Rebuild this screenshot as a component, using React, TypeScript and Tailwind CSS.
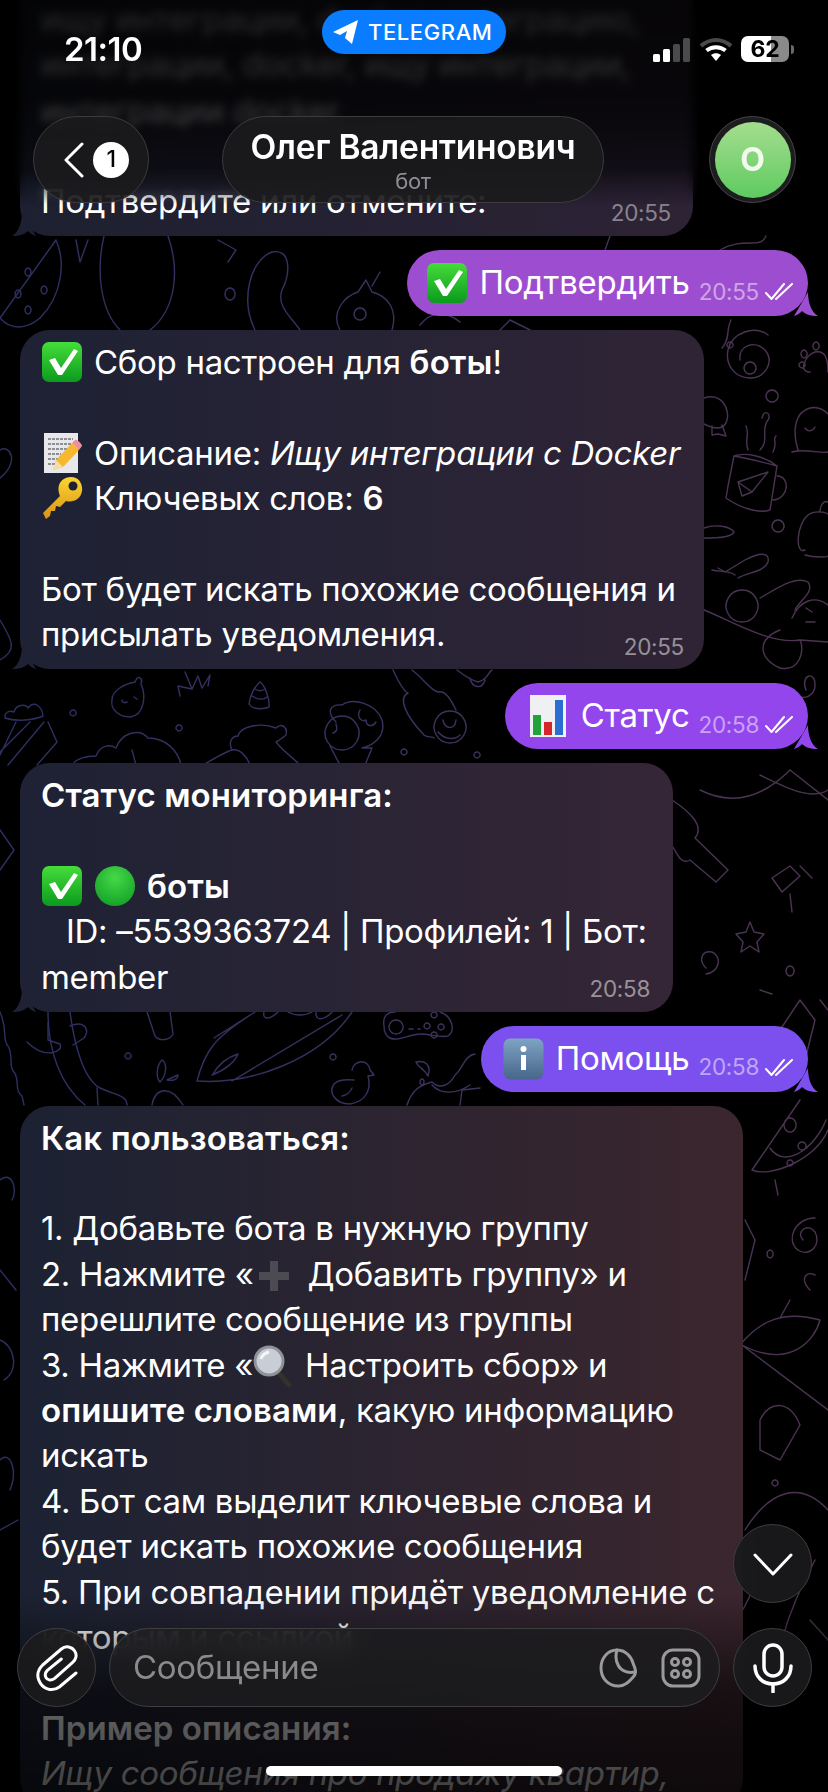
import React from "react";

// doodle wallpaper, coordinates are page pixels
const DOODLES = [
  // top row, left of the first outgoing bubble
  "M0 318 C20 290 40 262 56 240 C66 262 62 296 40 318 C26 330 10 330 0 318 Z",
  "M28 268 a3 4 0 1 0 .1 0 M18 290 a3 4 0 1 0 .1 0 M44 286 a3 4 0 1 0 .1 0 M28 306 a3 4 0 1 0 .1 0",
  "M104 236 C96 270 100 310 120 330 M168 236 C180 270 176 310 150 330 M76 240 L80 262 L88 240",
  "M255 330 C240 300 250 260 272 252 C292 248 290 275 282 290 C276 306 292 318 300 330",
  "M230 288 a5 6 0 1 0 .1 0 M218 240 L236 250 L228 262",
  "M340 330 C330 312 345 296 358 292 L366 280 L372 292 C388 296 398 310 392 330 M360 308 a6 6 0 1 0 .1 0 M372 286 L380 272",
  "M420 325 C430 312 445 310 460 322 M500 330 L510 320 L530 330 M610 236 L605 250 L625 262 M720 250 C745 236 760 250 766 236",
  // right column
  "M740 360 C738 345 755 340 765 350 C775 362 765 378 750 378 C735 378 725 365 728 350 C732 332 755 325 768 335",
  "M750 362 a6 6 0 1 0 .1 0",
  "M810 372 C798 372 805 355 815 352 C825 350 828 358 828 372 M804 350 a3 4 0 1 0 .1 0 M802 362 a3 3 0 1 0 .1 0 M816 342 a3 4 0 1 0 .1 0",
  "M772 390 a6 6 0 1 0 .1 0 M731 320 C726 330 730 340 722 348 M730 342 a3 3 0 1 0 .1 0",
  "M704 398 C722 392 730 410 727 420 C724 432 712 428 704 424 M722 425 L726 436 L718 434 L712 435 L712 426",
  "M798 450 C792 430 795 412 810 408 C818 406 824 410 828 414 M792 452 C805 448 820 454 828 452 M805 428 C808 432 812 432 815 427",
  "M734 456 L728 486 L726 498 C740 508 760 514 770 510 L777 466 C762 462 745 458 734 456 Z M734 456 C745 452 765 456 777 466 M777 476 C790 476 790 498 773 500",
  "M738 482 L768 472 L752 492 L742 496 Z M738 482 L752 492",
  "M748 450 C744 440 750 436 746 426 M760 450 C770 440 760 430 768 420 C772 414 764 408 762 418 M773 452 C778 442 772 440 776 436",
  "M805 550 C795 555 796 525 808 515 C815 510 825 512 828 514 M805 555 C815 558 828 557 828 556 M820 512 C820 505 824 500 828 502",
  "M778 520 a6 6 0 1 0 .1 0",
  "M704 528 C715 524 730 526 734 532 C732 538 715 538 704 538",
  "M704 610 C730 620 770 645 800 640 L828 642 M718 568 L725 572 L745 560 C760 552 770 552 768 562 C764 572 748 572 738 578",
  "M742 590 a16 16 0 1 0 .1 0 M735 575 C728 570 720 572 712 570 M760 598 C775 590 795 575 808 582 C815 592 800 600 795 610",
  "M792 618 C800 600 815 595 828 605 M806 608 L812 612 M806 622 L815 622 M780 630 C755 640 760 660 780 668 C800 672 805 650 800 640",
  "M806 690 C800 675 815 670 815 685 C815 700 795 702 790 688",
  // row left of the status button
  "M5 718 C4 712 10 710 14 712 C16 704 26 704 28 708 C34 700 42 706 43 716 C34 720 16 722 5 718 Z",
  "M0 755 L16 722 M48 722 L57 742 L37 765 M44 722 L8 765 M30 722 L0 752",
  "M112 700 C112 690 125 684 135 682 L137 678 C140 676 143 680 141 684 C146 695 145 715 130 717 C120 717 110 710 112 700 Z M122 700 C122 703 125 703 127 702 M134 697 L137 699",
  "M180 696 L178 686 L192 689 L185 672 M192 689 L198 676 L202 688 L210 675 L208 686",
  "M260 682 C265 685 270 700 269 707 C262 710 252 709 249 704 C250 695 255 686 260 682 Z M252 696 C258 700 264 700 267 697 M255 689 C258 691 262 691 265 689",
  "M336 722 C326 712 330 704 342 705 C352 698 375 702 382 720 C386 735 375 745 362 748 L372 748 L365 765 M340 765 L330 746",
  "M342 716 a17 17 0 1 0 .1 0 M360 710 C356 718 362 722 366 720 C366 726 372 728 376 722 M336 724 C338 730 336 732 333 733",
  "M72 765 C78 756 92 756 96 756 C100 745 110 744 116 748 C122 732 140 728 148 738 C165 738 178 750 181 765 M132 750 L136 765",
  "M203 765 C215 758 225 752 232 750 C228 742 232 736 238 736 C240 726 262 722 276 728 C282 722 288 728 286 735 C282 738 280 740 276 742 C284 752 290 755 300 765 M232 750 C240 748 248 758 250 765",
  "M393 670 C400 685 405 692 408 693 C398 698 405 715 424 735 C428 738 432 736 434 738 M412 670 C425 680 430 690 438 692 C445 690 450 698 456 710",
  "M450 711 a16 16 0 1 0 .1 0 M443 720 C445 730 455 730 456 720 M438 732 C445 740 455 740 460 735",
  "M73 710 a3 3 0 1 0 .1 0 M179 725 a3 3 0 1 0 .1 0 M404 749 a3 3 0 1 0 .1 0 M477 752 a3 3 0 1 0 .1 0",
  "M457 670 C465 676 470 680 478 682 C488 680 488 672 492 670 M470 678 C472 688 482 690 485 680",
  // status side right
  "M790 770 C770 790 740 810 700 790 M760 775 C790 790 812 800 828 790 M790 770 L828 800",
  "M672 800 C690 812 705 826 695 838 L728 870 L716 882 L690 860 C680 866 676 850 672 846",
  "M772 878 L790 866 L800 876 L782 892 Z M800 866 L812 878 M792 912 L790 894",
  "M750 922 L754 932 L764 934 L757 942 L759 952 L750 946 L741 952 L743 942 L736 934 L746 932 Z",
  "M706 968 C698 960 702 950 712 952 C722 956 720 972 706 974 M790 966 a4 5 0 1 0 .1 0 M760 990 L772 994",
  "M800 1000 L815 1020 L805 1060 L790 1052 L780 1030 Z M820 1000 L828 1010",
  // gap under the status bubble
  "M0 1012 C8 1030 2 1040 8 1046 C14 1056 8 1066 14 1072 C20 1080 14 1090 22 1096 L24 1105",
  "M70 1012 C75 1050 85 1080 100 1088 C115 1095 127 1095 127 1105 M48 1012 C48 1050 60 1085 85 1105 M97 1088 L98 1105",
  "M48 1023 L48 1040 L60 1044 C64 1052 45 1060 27 1042 M70 1026 C85 1020 90 1030 84 1038 L73 1045",
  "M147 1012 L155 1036 C160 1042 170 1040 173 1034 L170 1012 M128 1053 a3 3 0 1 0 .1 0",
  "M162 1060 C156 1066 156 1078 160 1082 C166 1076 168 1064 162 1060 Z M167 1080 L178 1075 C178 1080 172 1081 167 1080 M152 1105 C155 1088 170 1084 183 1105",
  "M197 1081 C205 1050 215 1037 255 1012 M197 1081 C250 1085 320 1060 352 1012 M232 1081 L342 1015 M213 1074 C220 1062 228 1057 238 1054 C235 1062 225 1070 212 1075 M214 1038 L255 1012",
  "M264 1012 C262 1020 270 1020 278 1012 M288 1012 C295 1016 305 1016 312 1012 M316 1012 C315 1022 325 1020 332 1012",
  "M384 1026 C382 1014 390 1012 395 1012 M440 1012 C452 1016 456 1030 448 1036 C440 1038 430 1034 420 1034 C410 1034 398 1042 390 1038 C386 1036 384 1032 384 1026",
  "M396 1020 a7 7 0 1 0 .1 0 M409 1029 L413 1029 M418 1029 L420 1029 M434 1012 a3 3 0 1 0 .1 0 M427 1023 a3 3 0 1 0 .1 0 M441 1024 a3 3 0 1 0 .1 0 M434 1032 a3 3 0 1 0 .1 0",
  "M333 1054 a3 3 0 1 0 .1 0",
  "M352 1070 C354 1060 368 1058 370 1070 L374 1075 L368 1076 C372 1090 365 1102 350 1104 C335 1104 328 1092 334 1084 C340 1078 350 1080 354 1080 M342 1096 C348 1095 350 1092 352 1088",
  "M416 1062 C424 1060 432 1064 428 1076 C424 1068 418 1068 416 1062 M422 1079 a2 3 0 1 0 .1 0",
  "M407 1105 C412 1090 420 1085 432 1082 C440 1090 450 1085 455 1075 C462 1070 465 1055 475 1054 M432 1085 C440 1094 455 1095 470 1085 M460 1105 L462 1090 L480 1088",
  // pizza and friends, right of help
  "M800 1100 L752 1170 C770 1178 815 1160 828 1130 M770 1148 C785 1170 815 1148 826 1120 M790 1118 a6 7 0 1 0 .1 0 M802 1142 a4 4 0 1 0 .1 0",
  "M803 1240 C795 1232 808 1222 815 1232 C822 1244 810 1258 798 1250 C785 1240 795 1218 815 1218",
  "M745 1220 L755 1240 L745 1280 M770 1250 a3 4 0 1 0 .1 0 M775 1180 L778 1195 M790 1160 a3 3 0 1 0 .1 0",
  "M740 1345 C760 1320 785 1310 820 1320 C815 1340 790 1370 742 1345 Z M742 1345 L828 1410 M780 1318 L790 1300",
  "M810 1290 C800 1280 805 1270 815 1275 M760 1420 C770 1400 790 1400 800 1425 L780 1460 L760 1450 Z M775 1480 a3 3 0 1 0 .1 0",
  "M745 1530 C770 1490 800 1480 828 1510 M760 1540 C765 1570 745 1610 735 1620 M815 1560 C800 1590 790 1610 782 1640 M810 1620 L828 1640",
  // left margin scraps
  "M0 450 C10 444 20 462 0 478 M0 620 C12 640 18 650 0 660 M0 830 L14 850 L0 870 M0 1180 C12 1170 18 1190 12 1200 M0 1270 L16 1290 M0 1340 C14 1345 20 1370 4 1380 M0 1460 C10 1450 18 1470 10 1490 M0 1530 L18 1520",
];

const OUT_TAIL = "M14 0 C14 10 17 20 24 24 C16 24 11 22 8 19 C6 22 0 24 0 24 Z";

function Wallpaper() {
  return (
    <svg className="absolute inset-0" width="828" height="1792" viewBox="0 0 828 1792" fill="none">
      <defs>
        <linearGradient id="wp" gradientUnits="userSpaceOnUse" x1="0" y1="0" x2="828" y2="0">
          <stop offset="0" stopColor="#2c2f62" />
          <stop offset="0.5" stopColor="#3d3160" />
          <stop offset="1" stopColor="#4d3450" />
        </linearGradient>
      </defs>
      {DOODLES.map((d, i) => (
        <path key={i} d={d} stroke="url(#wp)" strokeWidth="1.4" strokeLinecap="round" strokeLinejoin="round" />
      ))}
    </svg>
  );
}

function CheckEmoji() {
  return (
    <svg className="inline-block align-[-9px] mr-[11px]" width="42" height="42" viewBox="0 0 42 42">
      <defs>
        <linearGradient id="ck" x1="0" y1="0" x2="0" y2="1">
          <stop offset="0" stopColor="#45dd3a" />
          <stop offset="1" stopColor="#0b9a1e" />
        </linearGradient>
      </defs>
      <rect x="1" y="1" width="40" height="40" rx="7" fill="url(#ck)" />
      <path d="M8 19 L14 17 L20 27 L33 8 L37 10 L21 34 L17 34 Z" fill="#fff" />
    </svg>
  );
}

function MemoEmoji() {
  return (
    <svg className="inline-block align-[-9px] mr-[11px]" width="42" height="42" viewBox="0 0 42 42">
      <rect x="3" y="1" width="34" height="40" fill="#e8e8ea" />
      <path d="M7 7 H32 M7 12 H30 M7 17 H26 M7 22 H20 M7 27 H18 M7 32 H14" stroke="#70707a" strokeWidth="1.5" strokeDasharray="3 1" />
      <path d="M12 38 L15 28 L31 11 L38 18 L22 35 Z" fill="#f5b82e" />
      <path d="M12 38 L15 28 L22 35 Z" fill="#f3dcae" />
      <path d="M31 11 L34 8 C36 7 41 12 41 14 L38 18 Z" fill="#ee8f9f" />
    </svg>
  );
}

function KeyEmoji() {
  return (
    <svg className="inline-block align-[-10px] mr-[11px]" width="42" height="44" viewBox="0 0 42 44">
      <defs>
        <linearGradient id="ke" x1="0" y1="0" x2="0" y2="1">
          <stop offset="0" stopColor="#fbd530" />
          <stop offset="1" stopColor="#d9921a" />
        </linearGradient>
      </defs>
      <path d="M2 37 L19 20 C14 8 22 1 30 1 C38 1 42 8 41 15 C40 23 32 27 25 25 L19 31 L15 30 L14 35 L10 35 L9 40 L5 43 Z" fill="url(#ke)" />
      <circle cx="32" cy="10" r="4.5" fill="#1f2233" />
    </svg>
  );
}

function ChartEmoji() {
  return (
    <svg className="inline-block align-[-9px] mr-[15px]" width="36" height="42" viewBox="0 0 36 42">
      <rect x="0" y="0" width="36" height="42" fill="#eef0f4" />
      <rect x="3" y="20" width="8" height="20" fill="#1fa33a" />
      <rect x="14" y="27" width="8" height="13" fill="#d5262c" />
      <rect x="25" y="5" width="8" height="35" fill="#2a6fd0" />
    </svg>
  );
}

function InfoEmoji() {
  return (
    <svg className="inline-block align-[-9px] mr-[12px]" width="41" height="42" viewBox="0 0 41 42">
      <defs>
        <linearGradient id="inf" x1="0" y1="0" x2="0" y2="1">
          <stop offset="0" stopColor="#7fa3c4" />
          <stop offset="1" stopColor="#46668a" />
        </linearGradient>
      </defs>
      <rect x="0.5" y="0.5" width="40" height="41" rx="7" fill="url(#inf)" />
      <rect x="18" y="17" width="5" height="15" fill="#fff" />
      <circle cx="20.5" cy="11" r="3" fill="#fff" />
    </svg>
  );
}

function GreenDot() {
  return (
    <svg className="inline-block align-[-9px] mr-[11px]" width="42" height="42" viewBox="0 0 42 42">
      <defs>
        <radialGradient id="gd" cx="0.5" cy="0.3" r="0.8">
          <stop offset="0" stopColor="#45d948" />
          <stop offset="1" stopColor="#0f9c24" />
        </radialGradient>
      </defs>
      <circle cx="21" cy="21" r="20" fill="url(#gd)" />
    </svg>
  );
}

function PlusEmoji() {
  return (
    <svg className="inline-block align-[-7px] ml-[3px] mr-[8px]" width="34" height="34" viewBox="0 0 34 34">
      <path d="M13 2 H21 V13 H32 V21 H21 V32 H13 V21 H2 V13 H13 Z" fill="#4c4a52" />
    </svg>
  );
}

function LensEmoji() {
  return (
    <svg className="inline-block align-[-10px] mr-[3px]" width="40" height="42" viewBox="0 0 40 42">
      <path d="M25 27 L36 40" stroke="#35312d" strokeWidth="5" strokeLinecap="round" />
      <circle cx="16" cy="16" r="14" fill="#c9ced6" stroke="#8e939a" strokeWidth="3" />
      <path d="M8 14 C9 10 12 8 16 7" stroke="#f4f6f8" strokeWidth="3" fill="none" />
    </svg>
  );
}

function Checks() {
  return (
    <svg width="28" height="18" viewBox="0 0 28 18" fill="none" stroke="#fff" strokeWidth="2" strokeLinecap="round" strokeLinejoin="round">
      <path d="M1 10 L6.5 16 L19 1" />
      <path d="M11 16 L27 1" />
    </svg>
  );
}

function Line({ children }: { children?: React.ReactNode }) {
  return <div className="h-[45.4px] leading-[45.4px] whitespace-nowrap">{children ?? "\u00a0"}</div>;
}

function Bold({ children }: { children: React.ReactNode }) {
  return <b className="font-semibold tracking-[0.1px]">{children}</b>;
}

function InBubble({ className, children }: { className: string; children: React.ReactNode }) {
  return (
    <div className={`relative rounded-[30px] pl-[21px] pr-[20px] pt-[10px] pb-[11.5px] text-white ${className}`}>
      {children}
    </div>
  );
}

function InTail({ color }: { color: string }) {
  return (
    <svg className={`absolute -left-[8px] bottom-0 -scale-x-100 ${color}`} width="24" height="24" viewBox="0 0 24 24" fill="currentColor">
      <path d={OUT_TAIL} />
    </svg>
  );
}

function OutBubble({ width, bg, tail, emoji, text, time }: { width: string; bg: string; tail: string; emoji: React.ReactNode; text: string; time: string }) {
  return (
    <div className={`relative self-end h-[66px] rounded-[33px] flex items-center justify-end pr-[15px] text-white ${width} ${bg}`}>
      <div className="flex items-center">
        {emoji}
        <span className="leading-none -mt-[1px]">{text}</span>
      </div>
      <div className="flex items-center gap-[6px] ml-[9px] mt-[18px]">
        <span className="text-[22.5px] text-white/50 leading-none">{time}</span>
        <Checks />
      </div>
      <svg className={`absolute -right-[10px] bottom-0 ${tail}`} width="24" height="24" viewBox="0 0 24 24" fill="currentColor">
        <path d={OUT_TAIL} />
      </svg>
    </div>
  );
}

function StatusBar() {
  return (
    <>
      <div className="absolute left-[64px] top-[30px] text-[33px] leading-[38px] font-semibold text-white tracking-[-0.5px]">21:10</div>
      <div className="absolute left-[322px] top-[10px] w-[184px] h-[44px] rounded-full bg-[#0a7cff] flex items-center pl-[10px] gap-[9px] text-white">
        <svg width="27" height="27" viewBox="0 0 27 27" fill="#fff">
          <path d="M1 13 L26 1 L20 25 L13 19 L15 12 L8 16 Z" />
        </svg>
        <span className="text-[22px] font-medium tracking-[0.6px] leading-none">TELEGRAM</span>
      </div>
      <div className="absolute left-[653px] top-[36px] flex items-center">
        <div className="flex items-end gap-[3px] h-[25px]">
          <div className="w-[7px] h-[8px] rounded-[1.5px] bg-white" />
          <div className="w-[7px] h-[13px] rounded-[1.5px] bg-white" />
          <div className="w-[7px] h-[18px] rounded-[1.5px] bg-[#4a4a4a]" />
          <div className="w-[7px] h-[24px] rounded-[1.5px] bg-[#4a4a4a]" />
        </div>
        <svg className="ml-[9px]" width="34" height="25" viewBox="0 0 34 25" fill="none" strokeLinecap="butt">
          <path d="M2 9 C11 1 23 1 32 9" stroke="#4a4a4a" strokeWidth="4" />
          <path d="M7.5 13.5 C13 9 21 9 26.5 13.5" stroke="#fff" strokeWidth="4" />
          <path d="M12 18 L17 24 L22 18 C19 15.5 15 15.5 12 18 Z" fill="#fff" />
        </svg>
        <div className="ml-[8px] w-[48px] h-[26px] rounded-[7px] bg-[linear-gradient(90deg,#fff_63%,#8a8a8a_63%)] text-[23px] font-bold text-black leading-[26px] text-center">62</div>
        <div className="ml-[2px] w-[3px] h-[9px] rounded-r-full bg-[#6a6a6a]" />
      </div>
    </>
  );
}

function Header() {
  const pill = "border border-[#3c3c3e] bg-[#1b1b1d]/90";
  return (
    <div className="absolute left-[33px] right-[32px] top-[116px] h-[87px] flex items-stretch">
      <div className={`w-[116px] rounded-full flex items-center pl-[30px] gap-[9px] ${pill}`}>
        <svg width="20" height="36" viewBox="0 0 20 36" fill="none" stroke="#fff" strokeWidth="3" strokeLinecap="round" strokeLinejoin="round">
          <path d="M18 2 L2 18 L18 34" />
        </svg>
        <div className="w-[36px] h-[36px] rounded-full bg-white text-black text-[23px] font-medium flex items-center justify-center">1</div>
      </div>
      <div className={`ml-[73px] w-[382px] rounded-full flex flex-col items-center pt-[9px] ${pill}`}>
        <div className="text-[33.5px] leading-[42px] font-semibold text-white tracking-[-0.2px] whitespace-nowrap">Олег Валентинович</div>
        <div className="text-[22px] leading-[26px] text-[#8e8e93]">бот</div>
      </div>
      <div className="ml-auto w-[87px] rounded-full border border-[#454547] bg-[#1d1d1f] flex items-center justify-center">
        <div className="w-[76px] h-[76px] rounded-full bg-gradient-to-b from-[#a3dd8e] to-[#5ccb60] text-[32px] font-bold text-[#f2fbee] flex items-center justify-center">О</div>
      </div>
    </div>
  );
}

function Composer() {
  const round = "w-[79px] h-[79px] rounded-full border border-[#3f3f41] bg-[#1b1b1d]/90 backdrop-blur-md flex items-center justify-center shrink-0";
  return (
    <>
      <div className={`absolute right-[16px] top-[1524px] ${round}`}>
        <svg width="40" height="24" viewBox="0 0 40 24" fill="none" stroke="#fff" strokeWidth="3" strokeLinecap="round" strokeLinejoin="round">
          <path d="M2 3 L20 22 L38 3" />
        </svg>
      </div>
      <div className="absolute left-[17px] right-[16px] top-[1628px] flex items-center">
        <div className={round}>
          <svg width="44" height="50" viewBox="100 10 130 150" fill="none" stroke="#fff" strokeWidth="9" strokeLinecap="round" strokeLinejoin="round">
            <path d="M222 100 L172 142 C150 158 120 148 110 120 C104 104 110 88 122 76 L178 28 C192 16 210 22 218 34 C226 46 222 60 212 68 L158 116 C148 124 136 122 132 114 C128 106 130 98 136 92 L178 58" />
          </svg>
        </div>
        <div className="ml-[13px] w-[611px] h-[79px] rounded-full border border-[#3f3f41] bg-[#1c1c1e]/85 backdrop-blur-md flex items-center pl-[23px] pr-[18px]">
          <span className="flex-1 text-[33px] text-[#8a8a8d] leading-none">Сообщение</span>
          <svg width="38" height="40" viewBox="0 0 38 40" fill="none" stroke="#9a9a9c" strokeWidth="3" strokeLinejoin="round" strokeLinecap="round">
            <path d="M18 2 C8 2 2 11 2 20 C2 30 9 38 19 38 C26 38 30 34 35 28 C38 24 36 20 34 15 C32 8 26 2 18 2 Z" />
            <path d="M18 2 C15 12 19 27 36 24" />
          </svg>
          <svg className="ml-[24px]" width="40" height="40" viewBox="0 0 40 40" fill="none" stroke="#9a9a9c" strokeWidth="3">
            <rect x="2" y="2" width="36" height="36" rx="10" />
            <circle cx="14" cy="14" r="3.5" />
            <circle cx="26" cy="14" r="3.5" />
            <circle cx="14" cy="26" r="3.5" />
            <circle cx="26" cy="26" r="3.5" />
          </svg>
        </div>
        <div className={`ml-auto ${round}`}>
          <svg width="40" height="50" viewBox="0 0 40 50" fill="none" stroke="#fff" strokeWidth="3.5" strokeLinecap="round">
            <rect x="11" y="2" width="18" height="31" rx="9" />
            <path d="M2 23 C2 34 10 41 20 41 C30 41 38 34 38 23" />
            <path d="M20 41 V49" />
          </svg>
        </div>
      </div>
    </>
  );
}

export default function App() {
  return (
    <div className="relative w-[828px] h-[1792px] overflow-hidden bg-black text-[33px] tracking-[-0.3px] [font-family:Inter,sans-serif]">
      <Wallpaper />

      {/* Messages */}
      <div className="relative flex flex-col gap-[14px] pl-[20px] pr-[20px]">
        <div className="relative w-[673px] h-[236px] rounded-b-[30px] bg-[linear-gradient(90deg,#1d2030,#2d2335)] pl-[21px] text-white flex flex-col justify-end pb-[12px]">
          <Line>ищу интеграции, docker, интеграцию,</Line>
          <Line>интеграции, docker, ищу интеграции,</Line>
          <Line>интеграции docker</Line>
          <Line />
          <div className="flex justify-between items-end pr-[22px] h-[45.4px]">
            <span className="leading-[45.4px]">Подтвердите или отмените:</span>
            <span className="text-[22.5px] text-white/45 leading-none">20:55</span>
          </div>
          <InTail color="text-[#1d2030]" />
        </div>

        <OutBubble
          width="w-[401px]"
          bg="bg-[#9d4ed0]"
          tail="text-[#9d4ed0]"
          emoji={<CheckEmoji />}
          text="Подтвердить"
          time="20:55"
        />

        <InBubble className="w-[684px] bg-[linear-gradient(90deg,#1e2234,#2f2436)]">
          <Line><CheckEmoji />Сбор настроен для <Bold>боты</Bold>!</Line>
          <Line />
          <Line><MemoEmoji />Описание: <i>Ищу интеграции с Docker</i></Line>
          <Line><KeyEmoji />Ключевых слов: <Bold>6</Bold></Line>
          <Line />
          <Line>Бот будет искать похожие сообщения и</Line>
          <div className="flex justify-between items-end h-[45.4px]">
            <span className="leading-[45.4px]">присылать уведомления.</span>
            <span className="text-[22.5px] text-white/50 leading-none -mb-[1px]">20:55</span>
          </div>
          <InTail color="text-[#1e2234]" />
        </InBubble>

        <OutBubble
          width="w-[303px]"
          bg="bg-[#9346ec]"
          tail="text-[#9346ec]"
          emoji={<ChartEmoji />}
          text="Статус"
          time="20:58"
        />

        <InBubble className="w-[653px] bg-[linear-gradient(90deg,#1e2234,#352636)]">
          <Line><Bold>Статус мониторинга:</Bold></Line>
          <Line />
          <Line><CheckEmoji /><GreenDot /><Bold>боты</Bold></Line>
          <Line><span className="pl-[25px]">ID: –5539363724 | Профилей: 1 | Бот:</span></Line>
          <div className="flex justify-between items-end h-[45.4px]">
            <span className="leading-[45.4px]">member</span>
            <span className="text-[22.5px] text-white/50 leading-none mr-[3px]">20:58</span>
          </div>
          <InTail color="text-[#1e2234]" />
        </InBubble>

        <OutBubble
          width="w-[327px]"
          bg="bg-[#7c50ef]"
          tail="text-[#7c50ef]"
          emoji={<InfoEmoji />}
          text="Помощь"
          time="20:58"
        />

        <InBubble className="w-[723px] bg-[linear-gradient(90deg,#1c2233,#3b262e)]">
          <Line><Bold>Как пользоваться:</Bold></Line>
          <Line />
          <Line>1. Добавьте бота в нужную группу</Line>
          <Line>2. Нажмите «<PlusEmoji /> Добавить группу» и</Line>
          <Line>перешлите сообщение из группы</Line>
          <Line>3. Нажмите «<LensEmoji /> Настроить сбор» и</Line>
          <Line><Bold>опишите словами</Bold>, какую информацию</Line>
          <Line>искать</Line>
          <Line>4. Бот сам выделит ключевые слова и</Line>
          <Line>будет искать похожие сообщения</Line>
          <Line>5. При совпадении придёт уведомление с</Line>
          <Line>которым и ссылкой</Line>
          <Line />
          <Line><Bold>Пример описания:</Bold></Line>
          <Line><i>Ищу сообщения про продажу квартир,</i></Line>
        </InBubble>
      </div>

      {/* top and bottom scrims over the chat */}
      <div className="absolute inset-x-0 top-0 h-[205px] backdrop-blur-[5px] bg-gradient-to-b from-black/85 via-black/80 to-black/50 [mask-image:linear-gradient(black_82%,transparent)]" />
      <div className="absolute inset-x-0 bottom-0 h-[200px] bg-gradient-to-b from-transparent via-black/60 to-black/75" />

      <StatusBar />
      <Header />
      <Composer />

      <div className="absolute left-[266px] top-[1766px] w-[296px] h-[10px] rounded-full bg-white" />
    </div>
  );
}
